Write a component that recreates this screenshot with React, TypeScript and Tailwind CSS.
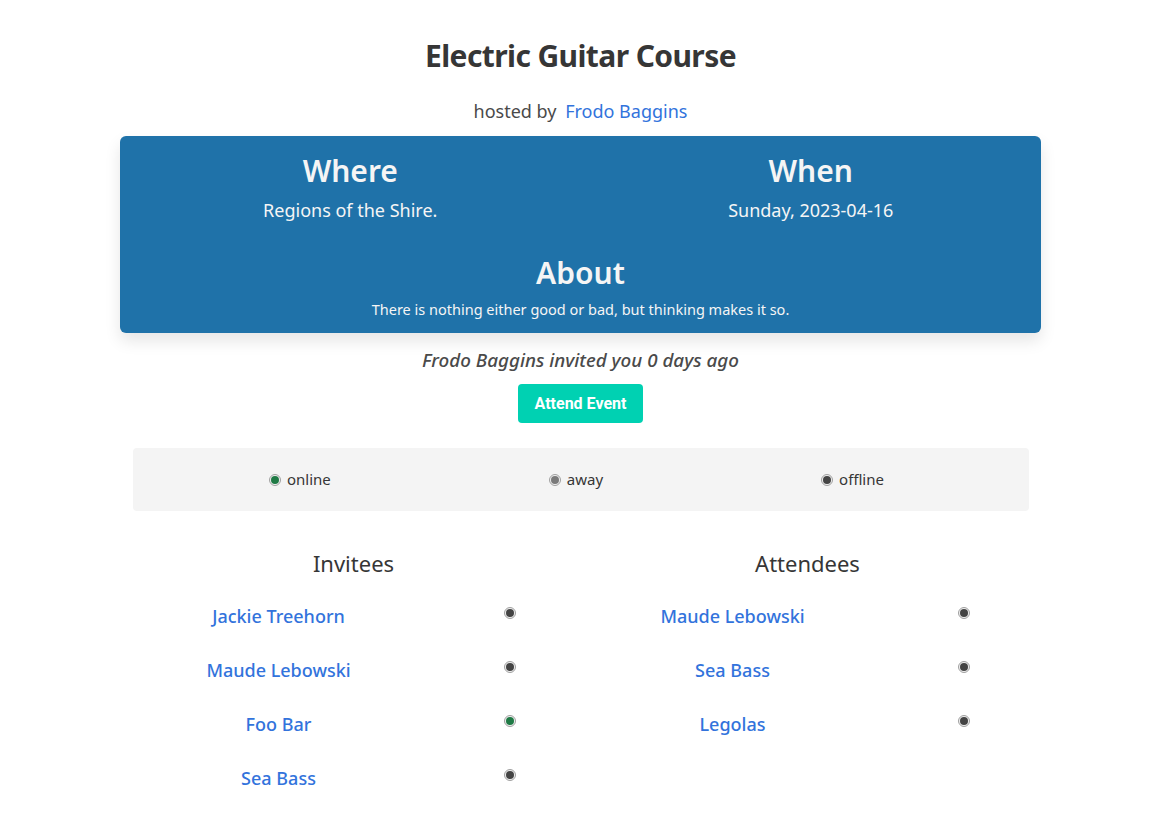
import React from 'react';

type Status = 'online' | 'away' | 'offline';

const dotColors: Record<Status, string> = {
  online: 'bg-[#1f7a45]',
  away: 'bg-[#7a7a7a]',
  offline: 'bg-[#444444]',
};

function StatusDot({ status }: { status: Status }) {
  return (
    <span className="inline-flex h-[12px] w-[12px] shrink-0 items-center justify-center rounded-full border border-[#a0a0a0] bg-[#f0f0f0]">
      <span className={`h-[8px] w-[8px] rounded-full ${dotColors[status]}`} />
    </span>
  );
}

const invitees: { name: string; status: Status }[] = [
  { name: 'Jackie Treehorn', status: 'offline' },
  { name: 'Maude Lebowski', status: 'offline' },
  { name: 'Foo Bar', status: 'online' },
  { name: 'Sea Bass', status: 'offline' },
];

const attendees: { name: string; status: Status }[] = [
  { name: 'Maude Lebowski', status: 'offline' },
  { name: 'Sea Bass', status: 'offline' },
  { name: 'Legolas', status: 'offline' },
];

function PeopleList({ title, people }: { title: string; people: { name: string; status: Status }[] }) {
  return (
    <div className="flex w-[454px] flex-col">
      <h3 className="text-center text-[22px] leading-[32px] text-[#363636]">{title}</h3>
      <div className="mt-[23px] flex flex-col">
        {people.map((p) => (
          <div key={p.name} className="flex h-[54px] items-start">
            <a href="#" className="w-[304px] text-center text-[18px] font-medium leading-[28px] text-[#3273dc]">
              {p.name}
            </a>
            <div className="flex w-[150px] justify-center pt-[5px] pl-[8px]">
              <StatusDot status={p.status} />
            </div>
          </div>
        ))}
      </div>
    </div>
  );
}

export default function App() {
  return (
    <div className="min-h-screen bg-white pb-8 font-['Noto_Sans',sans-serif] text-[#4a4a4a]">
      <div className="mx-auto flex w-[921px] -translate-x-[1px] flex-col items-center pt-[36px]">
        <h1 className="text-[30px] font-bold leading-[40px] tracking-[-0.6px] text-[#363636]">Electric Guitar Course</h1>
        <p className="mt-[20px] text-[18px] leading-[30px]">
          hosted by <a href="#" className="ml-1 text-[#3273dc]">Frodo Baggins</a>
        </p>

        <div className="mt-[10px] w-full rounded-[6px] bg-[#1f72a9] pt-[15px] pb-[13px] text-[#f5f5f5] shadow-[0_8px_16px_rgba(10,10,10,0.1)]">
          <div className="grid grid-cols-2">
            <div className="flex flex-col items-center">
              <h2 className="text-[30px] font-semibold leading-[40px]">Where</h2>
              <p className="mt-[6px] text-[18px] leading-[26px]">Regions of the Shire.</p>
            </div>
            <div className="flex flex-col items-center">
              <h2 className="text-[30px] font-semibold leading-[40px]">When</h2>
              <p className="mt-[6px] text-[18px] leading-[26px]">Sunday, 2023-04-16</p>
            </div>
          </div>
          <div className="mt-[30px] flex flex-col items-center">
            <h2 className="text-[30px] font-semibold leading-[40px]">About</h2>
            <p className="mt-[5px] text-[14.5px] leading-[22px]">There is nothing either good or bad, but thinking makes it so.</p>
          </div>
        </div>

        <p className="mt-[13px] text-[18.8px] font-medium italic leading-[28px]">Frodo Baggins invited you 0 days ago</p>
        <button className="mt-[10px] h-[39px] rounded-[4px] bg-[#00d1b2] px-[17px] font-['Roboto',sans-serif] text-[16px] font-bold text-white">
          Attend Event
        </button>

        <div className="mt-[25px] flex h-[63px] w-[896px] items-center justify-center gap-[218px] rounded-[4px] bg-[#f4f4f4] pr-[8px] text-[15px] text-[#363636]">
          <span className="flex items-center gap-[6px]"><StatusDot status="online" />online</span>
          <span className="flex items-center gap-[6px]"><StatusDot status="away" />away</span>
          <span className="flex items-center gap-[6px]"><StatusDot status="offline" />offline</span>
        </div>

        <div className="mt-[36px] flex w-[908px]">
          <PeopleList title="Invitees" people={invitees} />
          <PeopleList title="Attendees" people={attendees} />
        </div>
      </div>
    </div>
  );
}
